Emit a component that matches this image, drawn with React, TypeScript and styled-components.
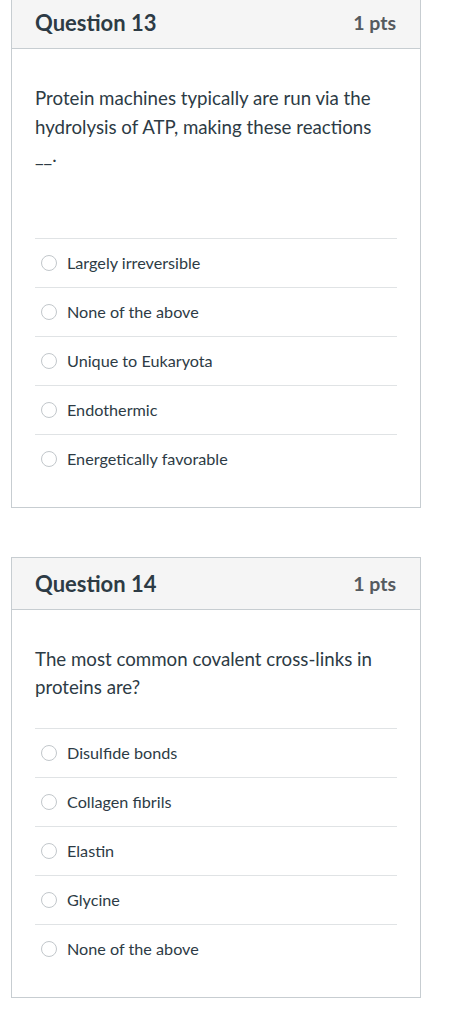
import React from "react";
import styled, { createGlobalStyle } from "styled-components";

const Global = createGlobalStyle`
  html, body { margin: 0; padding: 0; background: #ffffff; }
  body { font-family: Lato, "Noto Sans", sans-serif; color: #2d3b45; }
`;

const Page = styled.div`
  display: flex;
  flex-direction: column;
  gap: 49px;
  padding: 0 36px 0 11px;
  margin-top: -4px;
`;

const Card = styled.section`
  border: 1px solid #c7cdd1;
  background: #ffffff;
  width: 408px;
`;

const Header = styled.header`
  height: 51px;
  display: flex;
  align-items: center;
  justify-content: space-between;
  padding: 0 24px 0 23px;
  background: #f5f5f5;
  border-bottom: 1px solid #c7cdd1;
`;

const Title = styled.h2`
  margin: 0;
  font-size: 22px;
  font-weight: 700;
  color: #2d3b45;
`;

const Points = styled.span`
  font-size: 19.5px;
  font-weight: 700;
  color: #555a5e;
`;

const Body = styled.div`
  padding: 35px 23px 24px 23px;
`;

const QuestionText = styled.div<{ $after: number }>`
  font-size: 18.7px;
  line-height: 28.5px;
  color: #2d3b45;
  margin-bottom: ${(p) => p.$after}px;
  p { margin: 0; }
`;

const Options = styled.ul`
  list-style: none;
  margin: 0;
  padding: 0;
  border-top: 1px solid #e0e3e5;
`;

const Option = styled.li`
  height: 48px;
  display: flex;
  align-items: center;
  gap: 10px;
  padding-left: 6px;
  font-size: 16.2px;
  color: #2d3b45;
  & + & { border-top: 1px solid #e0e3e5; }
`;

const Radio = styled.span`
  width: 16px;
  height: 16px;
  box-sizing: border-box;
  border-radius: 50%;
  border: 1px solid #c2c7cb;
  background: #ffffff;
  flex: none;
`;

type Q = { n: number; text: string[]; after: number; options: string[] };

const questions: Q[] = [
  {
    n: 13,
    text: [
      "Protein machines typically are run via the hydrolysis of ATP, making these reactions __.",
    ],
    after: 68,
    options: [
      "Largely irreversible",
      "None of the above",
      "Unique to Eukaryota",
      "Endothermic",
      "Energetically favorable",
    ],
  },
  {
    n: 14,
    text: ["The most common covalent cross-links in proteins are?"],
    after: 26,
    options: [
      "Disulfide bonds",
      "Collagen fibrils",
      "Elastin",
      "Glycine",
      "None of the above",
    ],
  },
];

export default function App() {
  return (
    <>
      <Global />
      <Page>
        {questions.map((q) => (
          <Card key={q.n}>
            <Header>
              <Title>Question {q.n}</Title>
              <Points>1 pts</Points>
            </Header>
            <Body>
              <QuestionText $after={q.after}>
                {q.text.map((t, i) => (
                  <p key={i}>{t}</p>
                ))}
              </QuestionText>
              <Options>
                {q.options.map((o) => (
                  <Option key={o}>
                    <Radio />
                    {o}
                  </Option>
                ))}
              </Options>
            </Body>
          </Card>
        ))}
      </Page>
    </>
  );
}
